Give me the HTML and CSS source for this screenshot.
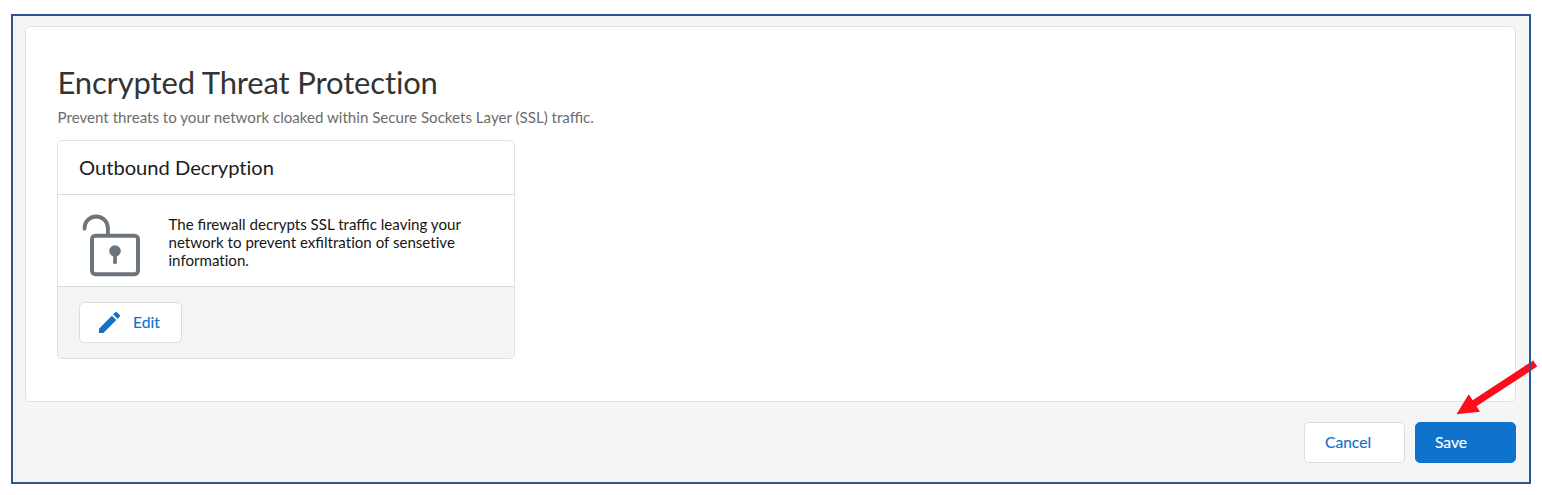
FILE: index.html
```html
<!DOCTYPE html>
<html lang="en">
<head>
<meta charset="utf-8">
<title>Encrypted Threat Protection</title>
<link rel="stylesheet" href="styles.css">
</head>
<body>
<div class="frame">
  <main class="panel">
    <h1 class="title">Encrypted Threat Protection</h1>
    <p class="subtitle">Prevent threats to your network cloaked within Secure Sockets Layer (SSL) traffic.</p>
    <section class="card">
      <h2 class="card-header">Outbound Decryption</h2>
      <div class="card-body">
        <svg class="lock" width="62" height="64" viewBox="80 213 62 64" fill="none" stroke="#6c757c">
          <path d="M84.5 228.7v-.5a11.7 11.7 0 0 1 23.4 0v7" stroke-width="3.8" stroke-linecap="round"/>
          <rect x="92" y="235.7" width="46" height="38.5" rx="3.4" stroke-width="4"/>
          <circle cx="115" cy="251" r="5.8" fill="#6c757c" stroke="none"/>
          <path d="M115 253v9.3" stroke-width="3.8" stroke-linecap="round"/>
        </svg>
        <p class="card-text">The <span class="liga">firewall</span> decrypts SSL <span class="liga">traffic</span> leaving your<br>network to prevent <span class="liga">exfil</span>tration of sensetive<br>information.</p>
      </div>
      <div class="card-footer">
        <button class="btn btn-edit" type="button">
          <svg class="pencil" width="21" height="21" viewBox="3 3 18 18" fill="#0f72cc"><path d="M3 17.25V21h3.75L17.81 9.94l-3.75-3.75L3 17.25zM20.71 7.04a1 1 0 0 0 0-1.41l-2.34-2.34a1 1 0 0 0-1.41 0l-1.83 1.83 3.75 3.75 1.83-1.83z"/></svg>
          <span>Edit</span>
        </button>
      </div>
    </section>
  </main>
  <div class="actions">
    <button class="btn btn-cancel" type="button"><span>Cancel</span></button>
    <button class="btn btn-save" type="button"><span>Save</span></button>
  </div>
</div>
<svg class="arrow" width="86" height="60" viewBox="1454 357 86 60">
  <path d="M1456.5 414.3L1468.7 394.3L1472.6 400.2L1533.2 360.6L1537.2 366.6L1476.5 406.2L1480 411.7Z" fill="#fd0d1b"/>
  <path d="M1530 357v60" stroke="#2f5496" stroke-width="2"/>
</svg>
</body>
</html>
```
FILE: styles.css
```css
* {
  box-sizing: border-box;
}

body {
  margin: 0;
  padding: 14px 11px;
  background: #fff;
  font-family: Lato, "Liberation Sans", sans-serif;
}

.frame {
  width: 1520px;
  height: 470px;
  padding: 10px 12px;
  border: 2px solid #2f5496;
  background: #f4f5f5;
}

.panel {
  width: 1491px;
  height: 376px;
  padding: 35px 31px 0;
  border: 1px solid #dfe2e2;
  border-radius: 5px;
  background: #fff;
}

.title {
  margin: 0 0 0 0.5px;
  font-size: 31px;
  font-weight: 400;
  line-height: 40px;
  letter-spacing: -0.15px;
  font-variant-ligatures: none;
  color: #333;
}

.subtitle {
  margin: 5px 0 13px 0.6px;
  font-size: 15.1px;
  line-height: 20px;
  color: #6c6c6c;
}

.card {
  width: 458px;
  border: 1px solid #dfe2e2;
  border-radius: 5px;
  overflow: hidden;
}

.card-header {
  height: 54px;
  margin: 0;
  padding-left: 21px;
  border-bottom: 1px solid #d8dbdb;
  font-size: 20.15px;
  font-weight: 400;
  line-height: 53px;
  font-variant-ligatures: none;
  color: #1c1c1c;
}

.card-body {
  display: flex;
  gap: 26.5px;
  height: 91px;
  padding: 18px 0 0 22px;
}

.card-text {
  margin: 2px 0 0;
  font-size: 15.1px;
  line-height: 18px;
  font-variant-ligatures: none;
  color: #161616;
  white-space: nowrap;
}

.liga {
  font-variant-ligatures: common-ligatures;
}

.card-footer {
  height: 72px;
  padding: 15px 21px;
  border-top: 1px solid #d8dbdb;
  background: #f3f5f5;
}

.btn {
  display: flex;
  align-items: center;
  height: 41px;
  padding: 0 20px;
  border: 1px solid #dadddd;
  border-radius: 5px;
  background: #fff;
  font-family: inherit;
  font-size: 15.6px;
  font-weight: 400;
  line-height: 20px;
  -webkit-text-stroke: 0.15px;
  color: #0f72cc;
}

.btn span {
  padding-bottom: 2px;
}

.btn-edit {
  gap: 13px;
  width: 103px;
  padding-left: 19px;
}

.actions {
  display: flex;
  justify-content: flex-end;
  gap: 10px;
  width: 1491px;
  padding-top: 20px;
}

.btn-cancel {
  width: 101px;
}

.btn-save {
  width: 101px;
  padding-left: 19px;
  border-color: #0f72cc;
  background: #0f72cc;
  color: #fff;
}

/* Callout arrow pointing at the Save button */
.arrow {
  position: absolute;
  left: 1454px;
  top: 357px;
}
```
